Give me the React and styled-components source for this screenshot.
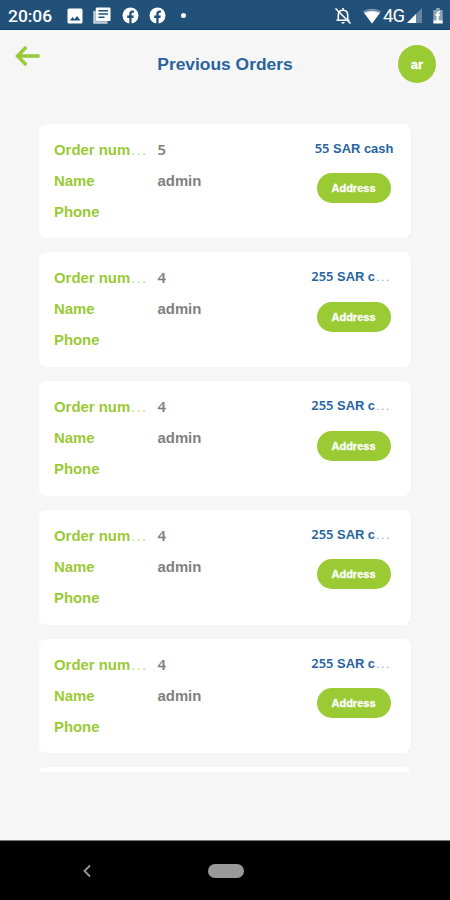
import React from 'react';
import styled, { createGlobalStyle } from 'styled-components';

const orders = [
  { id: 1, number: '5', name: 'admin', price: '55', label: 'SAR cash' },
  { id: 2, number: '4', name: 'admin', price: '255', label: 'SAR c', cut: true },
  { id: 3, number: '4', name: 'admin', price: '255', label: 'SAR c', cut: true },
  { id: 4, number: '4', name: 'admin', price: '255', label: 'SAR c', cut: true },
  { id: 5, number: '4', name: 'admin', price: '255', label: 'SAR c', cut: true },
];

const StatusBar = () => {
  return (
    <StatusBarContainer>
      <Clock>20:06</Clock>
      <Notifications>
        <svg width="16" height="16" viewBox="0 0 16 16">
          <path fill="#fff" fillRule="evenodd" d="M2 .5h12A1.500 1.500 0 0 1 15.500 2v12a1.500 1.500 0 0 1-1.500 1.500H2A1.500 1.500 0 0 1 .5 14V2A1.500 1.500 0 0 1 2 .5zM3 12.500h10.500L10 8l-2.600 3.200L5.500 9z" />
        </svg>
        <svg width="18" height="17" viewBox="0 0 18 17">
          <path d="M1.500 4v11.500h13" fill="none" stroke="#c3cfda" strokeWidth="2.400" />
          <path fill="#fff" fillRule="evenodd" d="M4 .5h12A1.300 1.300 0 0 1 17.500 2v10.500a1.300 1.300 0 0 1-1.500 1.500H4a1.300 1.300 0 0 1-1.300-1.500V2A1.300 1.300 0 0 1 4 .5zM5.500 3v1.500h9.500V3zm0 3.200v1.500h9.500V6.200zm0 3.200v1.500h6V9.400z" />
        </svg>
        <FacebookIcon />
        <FacebookIcon />
        <Dot />
      </Notifications>
      <System>
        <svg width="18" height="18" viewBox="0 0 18 18">
          <g fill="none" stroke="#fff" strokeWidth="1.600">
            <path d="M4.300 13V8.200C4.300 5 6 3.200 9 3.200s4.700 1.800 4.700 5V13M2.500 13.300h13M9 1v2" />
            <path d="M1.500 1.500l15 15" />
          </g>
          <path fill="#fff" d="M7.300 15h3.400a1.700 1.700 0 0 1-3.400 0z" />
        </svg>
        <svg className="wifi" width="20" height="16" viewBox="0 0 20 16">
          <path fill="#7791aa" d="M1 3.500C6-.2 14-.2 19 3.500L10 15.500z" />
          <path fill="#fff" d="M2.200 5C6.500 2.600 13.500 2.600 17.800 5L10 15.500z" />
        </svg>
        <Network>4G</Network>
        <svg className="signal" width="15" height="15" viewBox="0 0 15 15">
          <path fill="#6685a1" d="M15 0v15H0z" />
          <path fill="#fff" d="M9 6v9H0z" />
        </svg>
        <svg className="battery" width="10" height="16" viewBox="0 0 10 17">
          <path fill="#8ca2b7" d="M3 0h4v2h3v11H0V2h3z" />
          <path fill="#fff" d="M0 13h10v3.500H0zM7 3.300v1.800c-1.200 0-1.300.3-1.300 1.400H7v1.800H5.700V13H3.500V8.300H2.300V6.500h1.200c0-2.200 1-3.200 3.500-3.200z" />
        </svg>
      </System>
    </StatusBarContainer>
  );
};

const FacebookIcon = () => (
  <svg width="17" height="17" viewBox="0 0 17 17">
    <circle cx="8.500" cy="8.500" r="8" fill="#fff" />
    <path fill="#215179" d="M7.300 17v-6H5.200V8.600h2.100V7c0-2.200 1.200-3.400 3.200-3.400.8 0 1.400.1 1.400.1v2h-1c-1 0-1.300.6-1.300 1.300v1.600h2.200L11.400 11H9.600v6z" />
  </svg>
);

const OrderCard = ({ order }) => {
  return (
    <Card>
      <Details>
        <Label>Order num<Ellipsis $color="#bedc84">...</Ellipsis></Label>
        <Value><Digits>{order.number}</Digits></Value>
        <Label>Name</Label>
        <Value>{order.name}</Value>
        <Label>Phone</Label>
        <Value />
      </Details>
      <Summary>
        <Price $cut={order.cut}>
          <Digits>{order.price}</Digits> {order.label}
          {order.cut && <Ellipsis $color="#8faec9">...</Ellipsis>}
        </Price>
        <AddressButton>Address</AddressButton>
      </Summary>
    </Card>
  );
};

const App = () => {
  return (
    <Screen>
      <GlobalStyle />
      <StatusBar />
      <Header>
        <BackButton aria-label="Back">
          <svg width="26" height="22" viewBox="0 0 26 22">
            <path d="M11.300 2L2.500 11l8.800 9M2.500 11h22" fill="none" stroke="#98c936" strokeWidth="3.400" />
          </svg>
        </BackButton>
        <Title>Previous Orders</Title>
        <Language>ar</Language>
      </Header>
      <OrderList>
        {orders.map((order) => (
          <OrderCard key={order.id} order={order} />
        ))}
        <Card />
      </OrderList>
      <NavBar>
        <svg width="10" height="14" viewBox="0 0 10 14">
          <path d="M8 1.500L2.500 7 8 12.500" fill="none" stroke="#999" strokeWidth="1.800" />
        </svg>
        <HomePill />
      </NavBar>
    </Screen>
  );
};

export default App;


const GlobalStyle = createGlobalStyle`
  * {
    box-sizing: border-box;
  }

  body {
    margin: 0;
    font-family: 'Liberation Sans', Arial, sans-serif;
  }

  button {
    border: 0;
    padding: 0;
    font-family: inherit;
  }
`;

const Screen = styled.div`
  width: 450px;
  height: 900px;
  display: flex;
  flex-direction: column;
  overflow: hidden;
  background: #f6f6f6;
`;

const StatusBarContainer = styled.div`
  height: 30px;
  flex-shrink: 0;
  display: flex;
  align-items: center;
  padding: 2px 7px 0 8px;
  background: #215179;
  border-bottom: 1px solid #10436f;
  color: #fff;
`;

const Clock = styled.span`
  width: 59px;
  font: 500 17.4px Roboto, sans-serif;
`;

const Notifications = styled.div`
  display: flex;
  align-items: center;
  gap: 10.300px;
`;

const Dot = styled.span`
  width: 5px;
  height: 5px;
  margin-left: 5px;
  border-radius: 50%;
  background: #fff;
`;

const System = styled.div`
  display: flex;
  align-items: center;
  margin-left: auto;

  .wifi {
    margin-left: 10px;
  }

  .signal {
    margin-left: 3px;
  }

  .battery {
    margin: 0 0 0 11px;
  }
`;

const Network = styled.span`
  width: 21px;
  margin-left: 1px;
  font: 400 18.500px Roboto, sans-serif;
  letter-spacing: -1px;
`;

const Header = styled.header`
  height: 93px;
  flex-shrink: 0;
  display: grid;
  grid-template-columns: 76px 1fr 76px;
  align-items: start;
  padding-top: 15px;
`;

const BackButton = styled.button`
  width: 26px;
  height: 22px;
  margin-left: 15px;
  background: none;

  svg {
    display: block;
  }
`;

const Title = styled.h1`
  margin: 9px 0 0;
  text-align: center;
  font-size: 17.400px;
  line-height: 20px;
  color: #2a639b;
`;

const Language = styled.button`
  width: 38px;
  height: 38px;
  margin-left: 24px;
  border-radius: 50%;
  background: #9acb34;
  color: #fff;
  font-size: 13px;
  font-weight: bold;
  -webkit-text-stroke: 0.3px #fff;
`;

const OrderList = styled.main`
  height: 649px;
  flex-shrink: 0;
  display: flex;
  flex-direction: column;
  gap: 14px;
  padding: 0.500px 39px 0;
  overflow: hidden;
`;

const Card = styled.section`
  height: 114.800px;
  flex-shrink: 0;
  display: flex;
  justify-content: space-between;
  padding: 11px 15px 0;
  border-radius: 7px;
  background:
    radial-gradient(circle at 100% 100%, #ddd 2px, transparent 4px),
    #fff;
  box-shadow: 0.500px 0 0.500px #ececec;
`;

const Details = styled.div`
  display: grid;
  grid-template-columns: 103.500px 90px;
  grid-auto-rows: 31px;
  align-content: start;
  line-height: 31px;
  font-size: 14.900px;
  font-weight: bold;
`;

const Label = styled.span`
  white-space: nowrap;
  color: #9aca35;
`;

const Value = styled.span`
  color: #808080;
`;

const Digits = styled.span`
  font-family: 'Noto Sans', sans-serif;
  font-weight: 600;
  line-height: 1;
`;

const Ellipsis = styled.span`
  margin-left: 1px;
  font-weight: normal;
  letter-spacing: 1.300px;
  color: ${({ $color }) => $color};
`;

const Summary = styled.div`
  width: 84px;
  display: flex;
  flex-direction: column;
  align-items: center;
  padding-top: 5.200px;
`;

const Price = styled.span`
  height: 18px;
  margin-left: ${({ $cut }) => ($cut ? '-6px' : '0')};
  white-space: nowrap;
  line-height: 18px;
  font-size: 12.900px;
  font-weight: bold;
  color: #2764a0;
`;

const AddressButton = styled.button`
  width: 74px;
  height: 30px;
  margin: 15.300px 1px 0 0;
  border-radius: 15px;
  background: #9acb34;
  color: #fff;
  font-size: 11px;
  font-weight: bold;
  -webkit-text-stroke: 0.3px #fff;
`;

const NavBar = styled.nav`
  flex: 1;
  display: flex;
  align-items: center;
  margin-top: 68px;
  padding-left: 82px;
  border-top: 1px solid #777;
  background: #000;
`;

const HomePill = styled.span`
  width: 36px;
  height: 14px;
  margin-left: 116px;
  border-radius: 7px;
  background: #999;
`;
